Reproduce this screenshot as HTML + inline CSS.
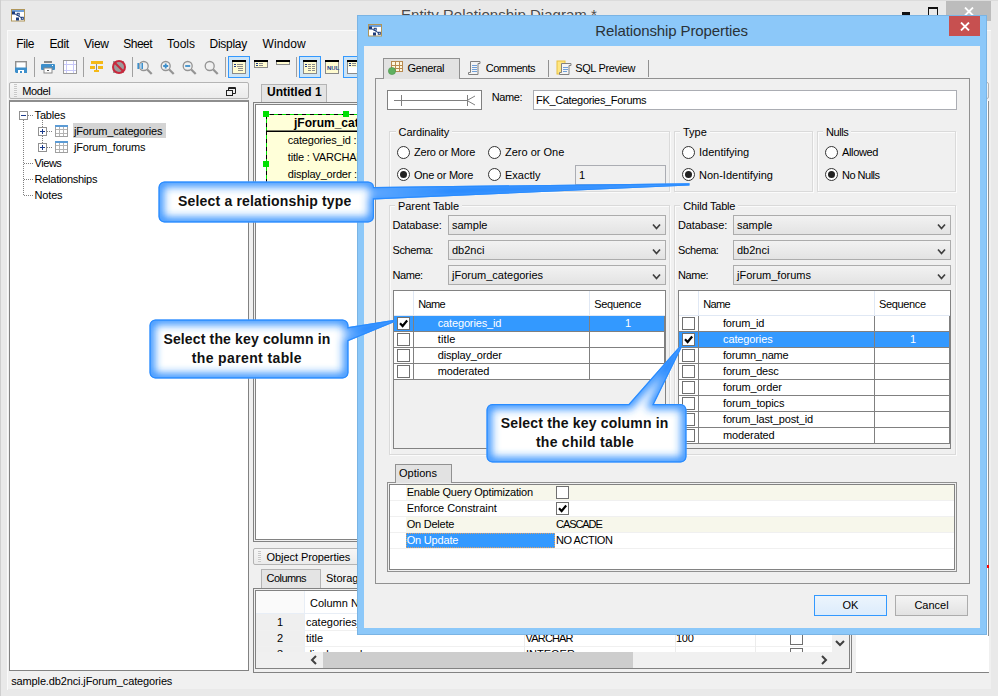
<!DOCTYPE html>
<html><head><meta charset="utf-8"><title>Relationship Properties</title>
<style>
*{box-sizing:border-box;margin:0;padding:0}
html,body{width:998px;height:696px;overflow:hidden;background:#e9e9e9}
body{position:relative;font-family:"Liberation Sans",sans-serif;font-size:11px;color:#000}
.a{position:absolute}
.t{position:absolute;white-space:nowrap;line-height:14px;height:14px}
.m{font-size:12px;line-height:16px;height:16px}
.grp{position:absolute;border:1px solid #dadada;box-shadow:inset 1px 1px 0 #fbfbfb,1px 1px 0 #fbfbfb}
.grp>span{position:absolute;top:-7px;left:6px;background:#f0f0f0;padding:0 3px;line-height:14px;white-space:nowrap}
.radio{position:absolute;width:13px;height:13px;border:1px solid #333;border-radius:50%;background:#fff}
.radio.on:after{content:"";position:absolute;left:2px;top:2px;width:7px;height:7px;border-radius:50%;background:#222}
.cb{position:absolute;width:13px;height:13px;border:1px solid #707070;background:#fff}
.combo{position:absolute;height:20px;border:1px solid #acacac;background:linear-gradient(#f2f2f2,#e3e3e3);line-height:18px;padding-left:3px;white-space:nowrap}
.btn{position:absolute;height:21px;border:1px solid #acacac;background:linear-gradient(#f4f4f4,#e2e2e2);text-align:center;line-height:19px;font-size:11px}
.co{font-weight:bold;font-size:14px;line-height:18px;height:18px;color:#111}
</style></head><body>
<!-- MAIN WINDOW -->
<div id="main" class="a" style="left:0;top:0;width:998px;height:696px">
<!-- title bar -->
<div class="a" style="left:0;top:0;width:998px;height:1px;background:#dcdcdc"></div>
<svg class="a" style="left:11px;top:9px" width="15" height="13" viewBox="0 0 15 13"><rect x="0.5" y="0.5" width="13" height="11.5" fill="#fff" stroke="#b0965a"/><rect x="1" y="1" width="12" height="2" fill="#6f9fd8"/><path d="M2.500 4L11.300 9.300" stroke="#1c3c7c" fill="none"/><rect x="1.500" y="3" width="2" height="2" fill="#fff" stroke="#1c3c7c"/><rect x="6.200" y="4.300" width="2" height="2" fill="#fff" stroke="#1c3c7c"/><rect x="5.500" y="9" width="2" height="2" fill="#fff" stroke="#1c3c7c"/><rect x="10.300" y="8.300" width="2" height="2" fill="#fff" stroke="#1c3c7c"/></svg>
<div class="t" style="left:401px;top:5px;font-size:15px;line-height:20px;height:20px;color:#4a4a4a;letter-spacing:0.03px">Entity Relationship Diagram *</div>
<div class="a" style="left:902px;top:12px;width:8px;height:3px;background:#111"></div>
<div class="a" style="left:928px;top:7px;width:10px;height:9px;border:1px solid #111;border-top-width:2px"></div>
<div class="a" style="left:946px;top:1px;width:45px;height:20px;background:#bcbcbc"></div>
<svg class="a" style="left:964px;top:7px" width="10" height="9"><path d="M1 0.5L9 8.5M9 0.5L1 8.5" stroke="#fff" stroke-width="1.8"/></svg>
<!-- client frame -->
<div class="a" style="left:0;top:0;width:1px;height:696px;background:#cfcfcf"></div>
<div class="a" style="left:7px;top:30px;width:984px;height:659px;background:#f0f0f0"></div>
<div class="a" style="left:7px;top:30px;width:984px;height:1px;background:#fafafa"></div>
<div class="a" style="left:7px;top:30px;width:1px;height:660px;background:#fafafa"></div>
<!-- menu -->
<div class="t m" style="left:16.3px;top:36px;letter-spacing:-0.41px">File</div>
<div class="t m" style="left:49.5px;top:36px;letter-spacing:-0.4px">Edit</div>
<div class="t m" style="left:84px;top:36px;letter-spacing:-0.27px">View</div>
<div class="t m" style="left:123.3px;top:36px;letter-spacing:-0.53px">Sheet</div>
<div class="t m" style="left:167px;top:36px;letter-spacing:-0.0px">Tools</div>
<div class="t m" style="left:209.6px;top:36px;letter-spacing:-0.28px">Display</div>
<div class="t m" style="left:262.5px;top:36px;letter-spacing:0.1px">Window</div>
<!-- toolbar -->
<svg class="a" style="left:0;top:54px" width="360" height="26" viewBox="0 54 360 26">
<!-- save -->
<rect x="15.7" y="61.7" width="10.6" height="7" fill="#fff" stroke="#909090" stroke-width="1.4"/><path d="M15 67.5h12v5.5h-11l-1-1z" fill="#3d8fcb"/><rect x="18" y="70" width="6" height="3" fill="#fff"/><rect x="20" y="71" width="2" height="2" fill="#3d8fcb"/>
<rect x="34" y="57" width="1" height="20" fill="#a0a0a0"/>
<!-- print -->
<rect x="44" y="61" width="8" height="2" fill="#8a8a8a"/><rect x="41" y="64" width="14" height="6" rx="1" fill="#3d8fcb"/><rect x="44" y="68" width="8" height="5" fill="#fff" stroke="#8a8a8a"/><rect x="47" y="70" width="2" height="1" fill="#555"/><rect x="52" y="65" width="1" height="1" fill="#fff"/>
<!-- grid -->
<rect x="63.5" y="60.5" width="13" height="13" fill="#fff" stroke="#9a9a9a"/><path d="M66.5 61v12M73.5 61v12M64 64.5h12M64 70.500h12" stroke="#c8c8f8" fill="none"/>
<rect x="83" y="57" width="1" height="20" fill="#a0a0a0"/>
<!-- org -->
<rect x="91" y="61" width="12" height="3" fill="#f5b916"/><rect x="96" y="64" width="1" height="7" fill="#8a8a8a"/><rect x="90" y="66" width="5" height="3" fill="#f5b916"/><rect x="98" y="66" width="5" height="3" fill="#f5b916"/><rect x="94" y="70" width="5" height="2" fill="#f5b916"/>
<!-- no sign -->
<rect x="113" y="61" width="11" height="12" fill="#9c9c9c"/><circle cx="119" cy="67" r="6" fill="none" stroke="#c8283c" stroke-width="2"/><path d="M114.500 62.500L123.500 71.500" stroke="#c8283c" stroke-width="2"/>
<rect x="132" y="57" width="1" height="20" fill="#a0a0a0"/>
<!-- magnifiers -->
<g fill="none" stroke="#949494" transform="translate(-1.300 0)">
<circle cx="145" cy="66" r="4.500" stroke-width="1.300"/><path d="M148.500 69.500L153 74" stroke-width="2.200"/>
<circle cx="167" cy="66" r="4.500" stroke-width="1.300"/><path d="M170.500 69.500L175 74" stroke-width="2.200"/>
<circle cx="189" cy="66" r="4.500" stroke-width="1.300"/><path d="M192.500 69.500L197 74" stroke-width="2.200"/>
<circle cx="211" cy="66" r="4.500" stroke-width="1.300"/><path d="M214.500 69.500L219 74" stroke-width="2.200"/>
</g>
<g transform="translate(-1.300 0)"><path d="M139.500 63v6M143.500 63v6" stroke="#3d8fcb" stroke-width="1.600"/><rect x="141" y="64" width="1.500" height="4" fill="#a8d0ee"/>
<path d="M164.500 66h5M167 63.500v5" stroke="#3d8fcb" stroke-width="1.800"/>
<path d="M186.500 66h5" stroke="#3d8fcb" stroke-width="1.800"/></g>
<rect x="225" y="57" width="1" height="20" fill="#a0a0a0"/>
<!-- selected 1 -->
<rect x="228.500" y="56.500" width="21" height="21" fill="#cce4f7" stroke="#3399ff"/>
<rect x="232.500" y="60.500" width="13" height="13" fill="#fffbd0" stroke="#8a8a8a"/><rect x="232" y="60" width="14" height="2" fill="#000"/>
<path d="M234 64.500h2M234 66.500h2" stroke="#1c3c8c"/><path d="M237 64.500h6M237 66.500h6M238 68.500h5M238 70.500h5" stroke="#8a8a8a"/>
<!-- icon 2 -->
<rect x="254.500" y="60.500" width="13" height="7" fill="#fffbd0" stroke="#8a8a8a"/><rect x="254" y="60" width="14" height="2" fill="#000"/>
<path d="M256 63.500h2M256 65.500h2" stroke="#1c3c8c"/><path d="M259 63.500h4M259 65.500h4" stroke="#8a8a8a"/>
<!-- icon 3 -->
<rect x="276.500" y="60.500" width="13" height="4" fill="#fffbd0" stroke="#8a8a8a"/><rect x="276" y="60" width="14" height="2" fill="#000"/>
<rect x="296" y="57" width="1" height="20" fill="#a0a0a0"/>
<!-- selected 2 -->
<rect x="299.500" y="56.500" width="21" height="21" fill="#cce4f7" stroke="#3399ff"/>
<rect x="303.500" y="60.500" width="13" height="13" fill="#fffbd0" stroke="#8a8a8a"/><rect x="303" y="60" width="14" height="2" fill="#000"/>
<path d="M305 64.500h2M305 66.500h2" stroke="#1c3c8c"/><path d="M308 64.500h3M312 64.500h3M308 66.500h3M312 66.500h3M308 68.500h3M312 68.500h3M308 70.500h3M312 70.500h3" stroke="#8a8a8a"/>
<!-- NUL -->
<rect x="325.500" y="60.500" width="13" height="13" fill="#fffbd0" stroke="#8a8a8a"/><rect x="325" y="60" width="14" height="2" fill="#000"/>
<text x="327" y="70" font-family="Liberation Sans, sans-serif" font-size="6" font-weight="bold" fill="#1c3c8c">NUL</text>
<!-- selected 3 -->
<rect x="343.500" y="56.500" width="21" height="21" fill="#cce4f7" stroke="#3399ff"/>
<rect x="347.500" y="60.500" width="13" height="13" fill="#fff" stroke="#8a8a8a"/><rect x="348" y="62" width="12" height="5" fill="#fffbd0"/><rect x="347" y="60" width="14" height="2" fill="#000"/>
<path d="M349 63.500h2M349 65.500h2" stroke="#1c3c8c"/><path d="M352 63.500h4M352 65.500h4" stroke="#8a8a8a"/>
</svg>

<!-- Model header -->
<div class="a" style="left:9px;top:82px;width:240px;height:17px;border:1px solid #b4b4b4;border-radius:2px;background:linear-gradient(#f6f6f6,#ebebeb)"></div>
<div class="a" style="left:14px;top:84px;width:3px;height:13px;background:repeating-linear-gradient(#c8c8c8 0 1px,#f4f4f4 1px 2px)"></div>
<div class="t" style="left:22.3px;top:84px;letter-spacing:-0.37px">Model</div>
<div class="a" style="left:228px;top:87px;width:8px;height:7px;border:1px solid #222;border-top-width:2px;border-radius:1px"></div>
<div class="a" style="left:226px;top:90px;width:7px;height:6px;border:1px solid #222;background:#f0f0f0"></div>
<!-- Tree panel -->
<div class="a" style="left:9px;top:100px;width:240px;height:571px;border:1px solid #828282;border-top:2px solid #8e8e8e;background:#fff"></div>
<svg class="a" style="left:10px;top:104px" width="238" height="100" viewBox="10 104 238 100">
<g stroke="#808080" stroke-dasharray="1 1" fill="none"><path d="M23.500 120v75M24 163.500h9M24 179.500h9M24 195.500h9M28 115.500h5M42.500 120v24M47 131.500h5M47 147.500h5"/></g>
<rect x="19.500" y="111.500" width="8" height="8" fill="#fff" stroke="#919191"/><path d="M21 115.500h5" stroke="#1c3c8c"/>
<rect x="38.500" y="127.500" width="8" height="8" fill="#fff" stroke="#919191"/><path d="M40 131.500h5M42.500 129v5" stroke="#1c3c8c"/>
<rect x="38.500" y="143.500" width="8" height="8" fill="#fff" stroke="#919191"/><path d="M40 147.500h5M42.500 145v5" stroke="#1c3c8c"/>
<g id="ti"><rect x="55.500" y="125.500" width="12" height="11" fill="#fff" stroke="#a0a0a0"/><rect x="55" y="125" width="13" height="2" fill="#5b9bd5"/><path d="M56 129.500h11M56 133.500h11M59.500 127v9M63.500 127v9" stroke="#b4b4b4"/></g>
<g transform="translate(0 16)"><rect x="55.500" y="125.500" width="12" height="11" fill="#fff" stroke="#a0a0a0"/><rect x="55" y="125" width="13" height="2" fill="#5b9bd5"/><path d="M56 129.500h11M56 133.500h11M59.500 127v9M63.500 127v9" stroke="#b4b4b4"/></g>
</svg>
<div class="a" style="left:73px;top:123px;width:93px;height:15px;background:#d4d4d4"></div>
<div class="t" style="left:34.6px;top:108px;letter-spacing:-0.2px">Tables</div>
<div class="t" style="left:74px;top:124px;letter-spacing:-0.16px">jForum_categories</div>
<div class="t" style="left:74px;top:140px;letter-spacing:-0.21px">jForum_forums</div>
<div class="t" style="left:34.6px;top:156px;letter-spacing:-0.47px">Views</div>
<div class="t" style="left:34.6px;top:172px;letter-spacing:-0.27px">Relationships</div>
<div class="t" style="left:34.6px;top:188px;letter-spacing:-0.19px">Notes</div>

<!-- Diagram tab -->
<div class="a" style="left:261px;top:84px;width:66px;height:19px;border:1px solid #b4b4b4;border-bottom:none;background:#e4e4e4"></div>
<div class="t" style="left:267px;top:85px;font-weight:bold;font-size:12px">Untitled 1</div>
<div class="a" style="left:253px;top:102px;width:601px;height:440px;border:1px solid #828282;background:#f0f0f0"></div>
<div class="a" style="left:255px;top:104px;width:597px;height:436px;border:1px solid #828282;background:#fff"></div>
<div class="a" style="left:266px;top:114px;width:100px;height:101px;background:#ffffd9"></div>
<svg class="a" style="left:262px;top:110px" width="100" height="108" viewBox="262 110 100 108"><path d="M266.500 215V114.500H362" fill="none" stroke="#00e000"/><path d="M266.500 215V114.500H362" fill="none" stroke="#000" stroke-dasharray="4 4"/><rect x="266" y="130.500" width="96" height="1.500" fill="#000"/><rect x="263" y="111" width="6" height="6" fill="#00e000"/><rect x="343" y="111" width="6" height="6" fill="#00e000"/><rect x="263" y="161" width="6" height="6" fill="#00e000"/></svg>
<div class="t" style="left:294px;top:116px;font-weight:bold;font-size:12px">jForum_categories</div>
<div class="t" style="left:287.8px;top:133px;letter-spacing:-0.2px">categories_id : INTEGER</div>
<div class="t" style="left:287.8px;top:150px;letter-spacing:-0.2px">title : VARCHAR(100)</div>
<div class="t" style="left:287.8px;top:167px;letter-spacing:-0.2px">display_order : INTEGER</div>

<!-- Object properties -->
<div class="a" style="left:253px;top:548px;width:600px;height:17px;border:1px solid #b4b4b4;border-radius:2px;background:linear-gradient(#f6f6f6,#ebebeb)"></div>
<div class="a" style="left:258px;top:551px;width:3px;height:11px;background:repeating-linear-gradient(#c8c8c8 0 1px,#f4f4f4 1px 2px)"></div>
<div class="t" style="left:266.6px;top:550px;letter-spacing:-0.08px">Object Properties</div>
<div class="a" style="left:261px;top:569px;width:60px;height:20px;border:1px solid #b4b4b4;border-bottom:none;background:#e4e4e4"></div>
<div class="t" style="left:266.6px;top:571px;letter-spacing:-0.57px">Columns</div>
<div class="t" style="left:326px;top:571px">Storage</div>
<div class="a" style="left:253px;top:588px;width:599px;height:85px;border:1px solid #828282;background:#f0f0f0"></div>
<div class="a" style="left:255px;top:590px;width:595px;height:79px;border:1px solid #828282;border-bottom-width:2px;background:#fff"></div>
<div class="a" style="left:256px;top:591px;width:49px;height:22px;background:#fafafa"></div>
<div class="a" style="left:256px;top:614px;width:49px;height:38px;background:#efefef"></div>
<div class="a" style="left:256px;top:613px;width:575px;height:1px;background:#e8eef6"></div>
<div class="a" style="left:256px;top:630px;width:575px;height:1px;background:#f0f0f0"></div>
<div class="a" style="left:256px;top:646px;width:575px;height:1px;background:#f0f0f0"></div>
<div class="a" style="left:304px;top:591px;width:1px;height:61px;background:#e8eef6"></div>
<div class="a" style="left:524px;top:614px;width:1px;height:38px;background:#ececec"></div><div class="a" style="left:675px;top:614px;width:1px;height:38px;background:#ececec"></div><div class="a" style="left:755px;top:614px;width:1px;height:38px;background:#ececec"></div>
<div class="t" style="left:310px;top:596px">Column Name</div>
<div class="t" style="left:277px;top:615px">1</div>
<div class="t" style="left:306px;top:615px">categories_id</div>
<div class="t" style="left:277px;top:631px">2</div>
<div class="t" style="left:306px;top:631px">title</div>
<div class="t" style="left:525.6px;top:631px;letter-spacing:-0.84px">VARCHAR</div>
<div class="t" style="left:676px;top:631px;letter-spacing:-0.25px">100</div>
<div class="cb" style="left:790px;top:632px"></div>
<div class="a" style="left:256px;top:647px;width:575px;height:5px;overflow:hidden"><div class="t" style="left:21px;top:0">3</div><div class="t" style="left:50px;top:0">display_order</div><div class="t" style="left:270px;top:0">INTEGER</div><div class="cb" style="left:534px;top:1px"></div></div>
<!-- scrollbars -->
<div class="a" style="left:256px;top:652px;width:593px;height:16px;background:#f0f0f0"></div>
<div class="a" style="left:832px;top:591px;width:17px;height:61px;background:#f0f0f0"></div>
<div class="a" style="left:323px;top:652px;width:310px;height:16px;background:#cdcdcd"></div>
<svg class="a" style="left:310px;top:655px" width="8" height="10"><path d="M6 1L2 5L6 9" fill="none" stroke="#404040" stroke-width="2"/></svg>
<svg class="a" style="left:820px;top:655px" width="8" height="10"><path d="M2 1L6 5L2 9" fill="none" stroke="#404040" stroke-width="2"/></svg>
<svg class="a" style="left:835px;top:639px" width="10" height="8"><path d="M1 2L5 6L9 2" fill="none" stroke="#404040" stroke-width="2"/></svg>
<!-- right panel -->
<div class="a" style="left:856px;top:82px;width:133px;height:17px;border:1px solid #b4b4b4;border-radius:2px;background:linear-gradient(#f6f6f6,#ebebeb)"></div>
<div class="a" style="left:856px;top:101px;width:133px;height:572px;background:#fff;border-bottom:1px solid #828282;border-right:1px solid #909090"></div>
<div class="a" style="left:856px;top:636px;width:133px;height:36px;background:#fff"></div>
<div class="a" style="left:987px;top:565px;width:2px;height:3px;background:#f00"></div>

<!-- status -->
<div class="t" style="left:11.2px;top:674px;letter-spacing:-0.13px">sample.db2nci.jForum_categories</div>
</div>
<!-- DIALOG -->
<div id="dlg" class="a" style="left:0;top:0;width:998px;height:696px">
<div class="a" style="left:357px;top:15px;width:630px;height:620px;background:#8cc8f9;border:1px solid #7ab4e4"></div>
<div class="a" style="left:364px;top:46px;width:616px;height:582px;background:#f0f0f0"></div>
<svg class="a" style="left:368px;top:24px" width="15" height="13" viewBox="0 0 15 13"><rect x="0.5" y="0.5" width="13" height="11.5" fill="#fff" stroke="#b0965a"/><rect x="1" y="1" width="12" height="2" fill="#6f9fd8"/><path d="M2.500 4L11.300 9.300" stroke="#1c3c7c" fill="none"/><rect x="1.500" y="3" width="2" height="2" fill="#fff" stroke="#1c3c7c"/><rect x="6.200" y="4.300" width="2" height="2" fill="#fff" stroke="#1c3c7c"/><rect x="5.500" y="9" width="2" height="2" fill="#fff" stroke="#1c3c7c"/><rect x="10.300" y="8.300" width="2" height="2" fill="#fff" stroke="#1c3c7c"/></svg>
<div class="t" style="left:595.3px;top:21px;font-size:15px;line-height:20px;height:20px;color:#2a3238;letter-spacing:-0.11px">Relationship Properties</div>
<div class="a" style="left:949px;top:16px;width:31px;height:20px;background:#c75050"></div>
<svg class="a" style="left:960px;top:22px" width="10" height="9"><path d="M1 0.500L9 8.500M9 0.500L1 8.500" stroke="#fff" stroke-width="1.800"/></svg>
<!-- tabs -->
<div class="a" style="left:375px;top:78px;width:595px;height:506px;border:1px solid #919191"></div>
<div class="a" style="left:383px;top:58px;width:77px;height:21px;border:1px solid #919191;border-bottom:none;background:#e2e2e2"></div>
<div class="a" style="left:548px;top:60px;width:1px;height:17px;background:#919191"></div>
<div class="a" style="left:648px;top:60px;width:1px;height:17px;background:#919191"></div>
<svg class="a" style="left:388px;top:60px" width="16" height="16" viewBox="0 0 16 16"><rect x="3.500" y="1.500" width="11" height="10" fill="#fff8e0" stroke="#b88a50"/><path d="M7.500 2v9M11.500 2v9M4 5.500h10M4 8.500h10" stroke="#b88a50"/><circle cx="4" cy="11" r="3.600" fill="#5fb05f" stroke="#4a964a" stroke-width="0.600"/></svg>
<div class="t" style="left:407.5px;top:61px;letter-spacing:-0.36px">General</div>
<svg class="a" style="left:466px;top:60px" width="16" height="16" viewBox="0 0 16 16"><path d="M4.500 1.500h9.500v2h-2v11h-9.500v-2h2z" fill="#f4f4f4" stroke="#808080"/><path d="M6 5.500h5M6 7.500h5M6 9.500h5M6 11.500h5" stroke="#6f9fd8"/></svg>
<div class="t" style="left:485.8px;top:61px;letter-spacing:-0.5px">Comments</div>
<svg class="a" style="left:556px;top:60px" width="16" height="16" viewBox="0 0 16 16"><rect x="1" y="1" width="8" height="13" fill="#ffe680" stroke="#e8c040"/><path d="M5.500 3.500h9.500v2h-2v9h-9.500v-2h2z" fill="#f4f4f4" stroke="#808080"/><path d="M7 7.500h5M7 9.500h5M7 11.500h4" stroke="#6f9fd8"/></svg>
<div class="t" style="left:575.2px;top:61px;letter-spacing:-0.36px">SQL Preview</div>
<!-- name row -->
<div class="a" style="left:387px;top:90px;width:95px;height:20px;border:1px solid #808080;background:#fff"></div>
<svg class="a" style="left:387px;top:90px" width="95" height="20"><path d="M7 10.500H80M14.500 5v11M80.500 5v11M80 10.500L88 6M80 10.500L88 15" stroke="#808080" fill="none"/></svg>
<div class="t" style="left:491.8px;top:90px;letter-spacing:-0.44px">Name:</div>
<div class="a" style="left:533px;top:90px;width:424px;height:20px;border:1px solid #abadb3;background:#fff"></div>
<div class="t" style="left:536px;top:93px;letter-spacing:-0.33px">FK_Categories_Forums</div>
<!-- groups row 1 -->
<div class="grp" style="left:389px;top:131px;width:281px;height:61px"><span style="left:5.6px;letter-spacing:-0.14px">Cardinality</span></div>
<div class="grp" style="left:674px;top:131px;width:139px;height:61px"><span style="left:5px">Type</span></div>
<div class="grp" style="left:817px;top:131px;width:139px;height:61px"><span style="left:5px;letter-spacing:-0.43px">Nulls</span></div>
<div class="radio" style="left:397px;top:146px"></div><div class="t" style="left:414px;top:145px;letter-spacing:-0.21px">Zero or More</div>
<div class="radio" style="left:488px;top:146px"></div><div class="t" style="left:505px;top:145px">Zero or One</div>
<div class="radio on" style="left:397px;top:168px"></div><div class="t" style="left:414px;top:168px;letter-spacing:-0.25px">One or More</div>
<div class="radio" style="left:488px;top:168px"></div><div class="t" style="left:505px;top:168px">Exactly</div>
<div class="a" style="left:575px;top:165px;width:91px;height:20px;border:1px solid #abadb3;background:#f0f0f0"></div>
<div class="t" style="left:579px;top:168px">1</div>
<div class="radio" style="left:682px;top:146px"></div><div class="t" style="left:699px;top:145px">Identifying</div>
<div class="radio on" style="left:682px;top:168px"></div><div class="t" style="left:699px;top:168px">Non-Identifying</div>
<div class="radio" style="left:825px;top:146px"></div><div class="t" style="left:842px;top:145px;letter-spacing:-0.36px">Allowed</div>
<div class="radio on" style="left:825px;top:168px"></div><div class="t" style="left:842px;top:168px;letter-spacing:-0.51px">No Nulls</div>
<div class="grp" style="left:389px;top:205px;width:281px;height:250px"><span style="left:5px;letter-spacing:-0.05px">Parent Table</span></div>
<div class="grp" style="left:674px;top:205px;width:282px;height:250px"><span style="left:5.3px;letter-spacing:-0.21px">Child Table</span></div>
<div class="t" style="left:392.5px;top:218px;letter-spacing:-0.1px">Database:</div>
<div class="combo" style="left:448px;top:215px;width:218px">sample<svg class="a" style="right:4px;top:7px" width="9" height="8"><path d="M1 1.500L4.500 5.500L8 1.500" fill="none" stroke="#404040" stroke-width="1.700"/></svg></div>
<div class="t" style="left:392.5px;top:243px;letter-spacing:-0.42px">Schema:</div>
<div class="combo" style="left:448px;top:240px;width:218px">db2nci<svg class="a" style="right:4px;top:7px" width="9" height="8"><path d="M1 1.500L4.500 5.500L8 1.500" fill="none" stroke="#404040" stroke-width="1.700"/></svg></div>
<div class="t" style="left:392.5px;top:268px;letter-spacing:-0.44px">Name:</div>
<div class="combo" style="left:448px;top:265px;width:218px">jForum_categories<svg class="a" style="right:4px;top:7px" width="9" height="8"><path d="M1 1.500L4.500 5.500L8 1.500" fill="none" stroke="#404040" stroke-width="1.700"/></svg></div>
<div class="t" style="left:678px;top:218px;letter-spacing:-0.1px">Database:</div>
<div class="combo" style="left:733px;top:215px;width:218px">sample<svg class="a" style="right:4px;top:7px" width="9" height="8"><path d="M1 1.500L4.500 5.500L8 1.500" fill="none" stroke="#404040" stroke-width="1.700"/></svg></div>
<div class="t" style="left:678px;top:243px;letter-spacing:-0.42px">Schema:</div>
<div class="combo" style="left:733px;top:240px;width:218px">db2nci<svg class="a" style="right:4px;top:7px" width="9" height="8"><path d="M1 1.500L4.500 5.500L8 1.500" fill="none" stroke="#404040" stroke-width="1.700"/></svg></div>
<div class="t" style="left:678px;top:268px;letter-spacing:-0.44px">Name:</div>
<div class="combo" style="left:733px;top:265px;width:218px">jForum_forums<svg class="a" style="right:4px;top:7px" width="9" height="8"><path d="M1 1.500L4.500 5.500L8 1.500" fill="none" stroke="#404040" stroke-width="1.700"/></svg></div>
<div class="a" style="left:393px;top:290px;width:273px;height:159px;border:1px solid #828282;background:#f0f0f0"></div>
<div class="a" style="left:394px;top:291px;width:271px;height:25px;background:#fff;border-bottom:1px solid #e0e8f4"></div>
<div class="a" style="left:413px;top:291px;width:1px;height:24px;background:#e0e8f4"></div>
<div class="a" style="left:589px;top:291px;width:1px;height:24px;background:#e0e8f4"></div>
<div class="t" style="left:418.2px;top:297px;letter-spacing:-0.64px">Name</div>
<div class="t" style="left:594.3px;top:297px;letter-spacing:-0.36px">Sequence</div>
<div class="a" style="left:394px;top:316px;width:271px;height:16px;background:#3399ff;border-bottom:1px solid #808080"></div>
<div class="cb" style="left:397px;top:317px"><svg class="a" style="left:1px;top:1px" width="9" height="9"><path d="M1 4.300L3.600 7L8.200 1.500" fill="none" stroke="#000" stroke-width="2.200"/></svg></div>
<div class="t" style="left:437.7px;top:316px;color:#fff;letter-spacing:-0.14px">categories_id</div>
<div class="t" style="left:625px;top:316px;color:#fff">1</div>
<div class="a" style="left:394px;top:332px;width:271px;height:16px;background:#fff;border-bottom:1px solid #808080"></div>
<div class="cb" style="left:397px;top:333px"></div>
<div class="t" style="left:437.7px;top:332px;color:#000;letter-spacing:0.14px">title</div>
<div class="a" style="left:394px;top:348px;width:271px;height:16px;background:#fff;border-bottom:1px solid #808080"></div>
<div class="cb" style="left:397px;top:349px"></div>
<div class="t" style="left:437.7px;top:348px;color:#000;letter-spacing:-0.16px">display_order</div>
<div class="a" style="left:394px;top:364px;width:271px;height:16px;background:#fff;border-bottom:1px solid #808080"></div>
<div class="cb" style="left:397px;top:365px"></div>
<div class="t" style="left:437.7px;top:364px;color:#000;letter-spacing:-0.11px">moderated</div>
<div class="a" style="left:413px;top:316px;width:1px;height:64px;background:#808080"></div>
<div class="a" style="left:589px;top:316px;width:1px;height:64px;background:#808080"></div>
<div class="a" style="left:664px;top:316px;width:1px;height:64px;background:#808080"></div>
<div class="a" style="left:678px;top:290px;width:273px;height:159px;border:1px solid #828282;background:#f0f0f0"></div>
<div class="a" style="left:679px;top:291px;width:271px;height:25px;background:#fff;border-bottom:1px solid #e0e8f4"></div>
<div class="a" style="left:698px;top:291px;width:1px;height:24px;background:#e0e8f4"></div>
<div class="a" style="left:874px;top:291px;width:1px;height:24px;background:#e0e8f4"></div>
<div class="t" style="left:703.2px;top:297px;letter-spacing:-0.64px">Name</div>
<div class="t" style="left:879px;top:297px;letter-spacing:-0.36px">Sequence</div>
<div class="a" style="left:679px;top:316px;width:271px;height:16px;background:#fff;border-bottom:1px solid #808080"></div>
<div class="cb" style="left:682px;top:317px"></div>
<div class="t" style="left:723px;top:316px;color:#000;letter-spacing:-0.2px">forum_id</div>
<div class="a" style="left:679px;top:332px;width:271px;height:16px;background:#3399ff;border-bottom:1px solid #808080"></div>
<div class="cb" style="left:682px;top:333px"><svg class="a" style="left:1px;top:1px" width="9" height="9"><path d="M1 4.300L3.600 7L8.200 1.500" fill="none" stroke="#000" stroke-width="2.200"/></svg></div>
<div class="t" style="left:723px;top:332px;color:#fff;letter-spacing:-0.12px">categories</div>
<div class="t" style="left:910px;top:332px;color:#fff">1</div>
<div class="a" style="left:679px;top:348px;width:271px;height:16px;background:#fff;border-bottom:1px solid #808080"></div>
<div class="cb" style="left:682px;top:349px"></div>
<div class="t" style="left:723px;top:348px;color:#000;letter-spacing:-0.23px">forumn_name</div>
<div class="a" style="left:679px;top:364px;width:271px;height:16px;background:#fff;border-bottom:1px solid #808080"></div>
<div class="cb" style="left:682px;top:365px"></div>
<div class="t" style="left:723px;top:364px;color:#000;letter-spacing:-0.18px">forum_desc</div>
<div class="a" style="left:679px;top:380px;width:271px;height:16px;background:#fff;border-bottom:1px solid #808080"></div>
<div class="cb" style="left:682px;top:381px"></div>
<div class="t" style="left:723px;top:380px;color:#000;letter-spacing:-0.11px">forum_order</div>
<div class="a" style="left:679px;top:396px;width:271px;height:16px;background:#fff;border-bottom:1px solid #808080"></div>
<div class="cb" style="left:682px;top:397px"></div>
<div class="t" style="left:723px;top:396px;color:#000;letter-spacing:-0.14px">forum_topics</div>
<div class="a" style="left:679px;top:412px;width:271px;height:16px;background:#fff;border-bottom:1px solid #808080"></div>
<div class="cb" style="left:682px;top:413px"></div>
<div class="t" style="left:723px;top:412px;color:#000;letter-spacing:-0.16px">forum_last_post_id</div>
<div class="a" style="left:679px;top:428px;width:271px;height:16px;background:#fff;border-bottom:1px solid #808080"></div>
<div class="cb" style="left:682px;top:429px"></div>
<div class="t" style="left:723px;top:428px;color:#000;letter-spacing:-0.11px">moderated</div>
<div class="a" style="left:698px;top:316px;width:1px;height:128px;background:#808080"></div>
<div class="a" style="left:874px;top:316px;width:1px;height:128px;background:#808080"></div>
<div class="a" style="left:949px;top:316px;width:1px;height:128px;background:#808080"></div>
<div class="a" style="left:387px;top:482px;width:570px;height:90px;border:1px solid #919191;background:#f0f0f0"></div>
<div class="a" style="left:395px;top:464px;width:57px;height:19px;border:1px solid #919191;border-bottom:none;background:#e2e2e2"></div>
<div class="t" style="left:399px;top:466px">Options</div>
<div class="a" style="left:389px;top:484px;width:566px;height:86px;border:1px solid #828282;background:#fff"></div>
<div class="a" style="left:406px;top:485px;width:548px;height:16px;background:#f7f7eb"></div>
<div class="a" style="left:406px;top:517px;width:548px;height:16px;background:#f7f7eb"></div>
<div class="a" style="left:390px;top:500px;width:564px;height:1px;background:#f0f0f0"></div>
<div class="a" style="left:390px;top:516px;width:564px;height:1px;background:#f0f0f0"></div>
<div class="a" style="left:390px;top:532px;width:564px;height:1px;background:#f0f0f0"></div>
<div class="a" style="left:390px;top:548px;width:564px;height:1px;background:#f0f0f0"></div>
<div class="a" style="left:406px;top:533px;width:149px;height:15px;background:#3399ff;outline:1px dotted #e0a060;outline-offset:-1px"></div>
<div class="t" style="left:406.7px;top:485px;letter-spacing:-0.21px">Enable Query Optimization</div>
<div class="t" style="left:406.7px;top:501px;letter-spacing:-0.06px">Enforce Constraint</div>
<div class="t" style="left:406.7px;top:517px;letter-spacing:-0.23px">On Delete</div>
<div class="t" style="left:406.7px;top:533px;color:#fff;letter-spacing:-0.19px">On Update</div>
<div class="cb" style="left:556px;top:486px"></div>
<div class="cb" style="left:556px;top:502px"><svg class="a" style="left:1px;top:1px" width="9" height="9"><path d="M1 4.300L3.600 7L8.200 1.500" fill="none" stroke="#000" stroke-width="2.200"/></svg></div>
<div class="t" style="left:556px;top:517px;letter-spacing:-1.06px">CASCADE</div>
<div class="t" style="left:556px;top:533px;letter-spacing:-0.46px">NO ACTION</div>
<div class="btn" style="left:814px;top:595px;width:73px;border-color:#3399ff;background:linear-gradient(#ecf4fc,#dcecfc)">OK</div>
<div class="btn" style="left:895px;top:595px;width:73px">Cancel</div>

</div>
<!-- CALLOUTS -->
<div id="callouts">
<svg class="a" style="left:0;top:0" width="998" height="696" viewBox="0 0 998 696">
<defs>
<filter id="glow" x="-10%" y="-30%" width="120%" height="160%"><feGaussianBlur stdDeviation="4.500"/></filter>
<clipPath id="c1"><path id="p1" d="M164.500 181.500H368a6 6 0 0 1 6 5.500L689.5 183.2V185.6L374 199.5V216.500a6 6 0 0 1-6 6H164.500a6 6 0 0 1-6-6V187.500a6 6 0 0 1 6-6Z"/></clipPath>
<clipPath id="c2"><path id="p2" d="M155.500 319.500H342.500a6 6 0 0 1 6 6V327L394.5 319.7V321.9L348.5 341V372.500a6 6 0 0 1-6 6H155.500a6 6 0 0 1-6-6V325.500a6 6 0 0 1 6-6Z"/></clipPath>
<clipPath id="c3"><path id="p3" d="M492.500 404H628.700L679.6 346.3L681.6 347.6L654 404H680.500a6 6 0 0 1 6 6V456.500a6 6 0 0 1-6 6H492.500a6 6 0 0 1-6-6V410a6 6 0 0 1 6-6Z"/></clipPath>
</defs>
<g clip-path="url(#c1)"><use href="#p1" fill="#ffffff"/><use href="#p1" fill="none" stroke="#2c8cff" stroke-width="10" filter="url(#glow)"/><use href="#p1" fill="none" stroke="#2a8cff" stroke-width="2.400"/></g>
<g clip-path="url(#c2)"><use href="#p2" fill="#ffffff"/><use href="#p2" fill="none" stroke="#2c8cff" stroke-width="10" filter="url(#glow)"/><use href="#p2" fill="none" stroke="#2a8cff" stroke-width="2.400"/></g>
<g clip-path="url(#c3)"><use href="#p3" fill="#ffffff"/><use href="#p3" fill="none" stroke="#2c8cff" stroke-width="10" filter="url(#glow)"/><use href="#p3" fill="none" stroke="#2a8cff" stroke-width="2.400"/></g>
</svg>
<div class="t co" style="left:178px;top:192px;letter-spacing:0.18px">Select a relationship type</div>
<div class="t co" style="left:163.4px;top:330px;letter-spacing:0.15px">Select the key column in</div>
<div class="t co" style="left:191.7px;top:349px;letter-spacing:0.38px">the parent table</div>
<div class="t co" style="left:500.8px;top:414px;letter-spacing:0.18px">Select the key column in</div>
<div class="t co" style="left:535.9px;top:433px;letter-spacing:0.27px">the child table</div>
</div>
</body></html>
